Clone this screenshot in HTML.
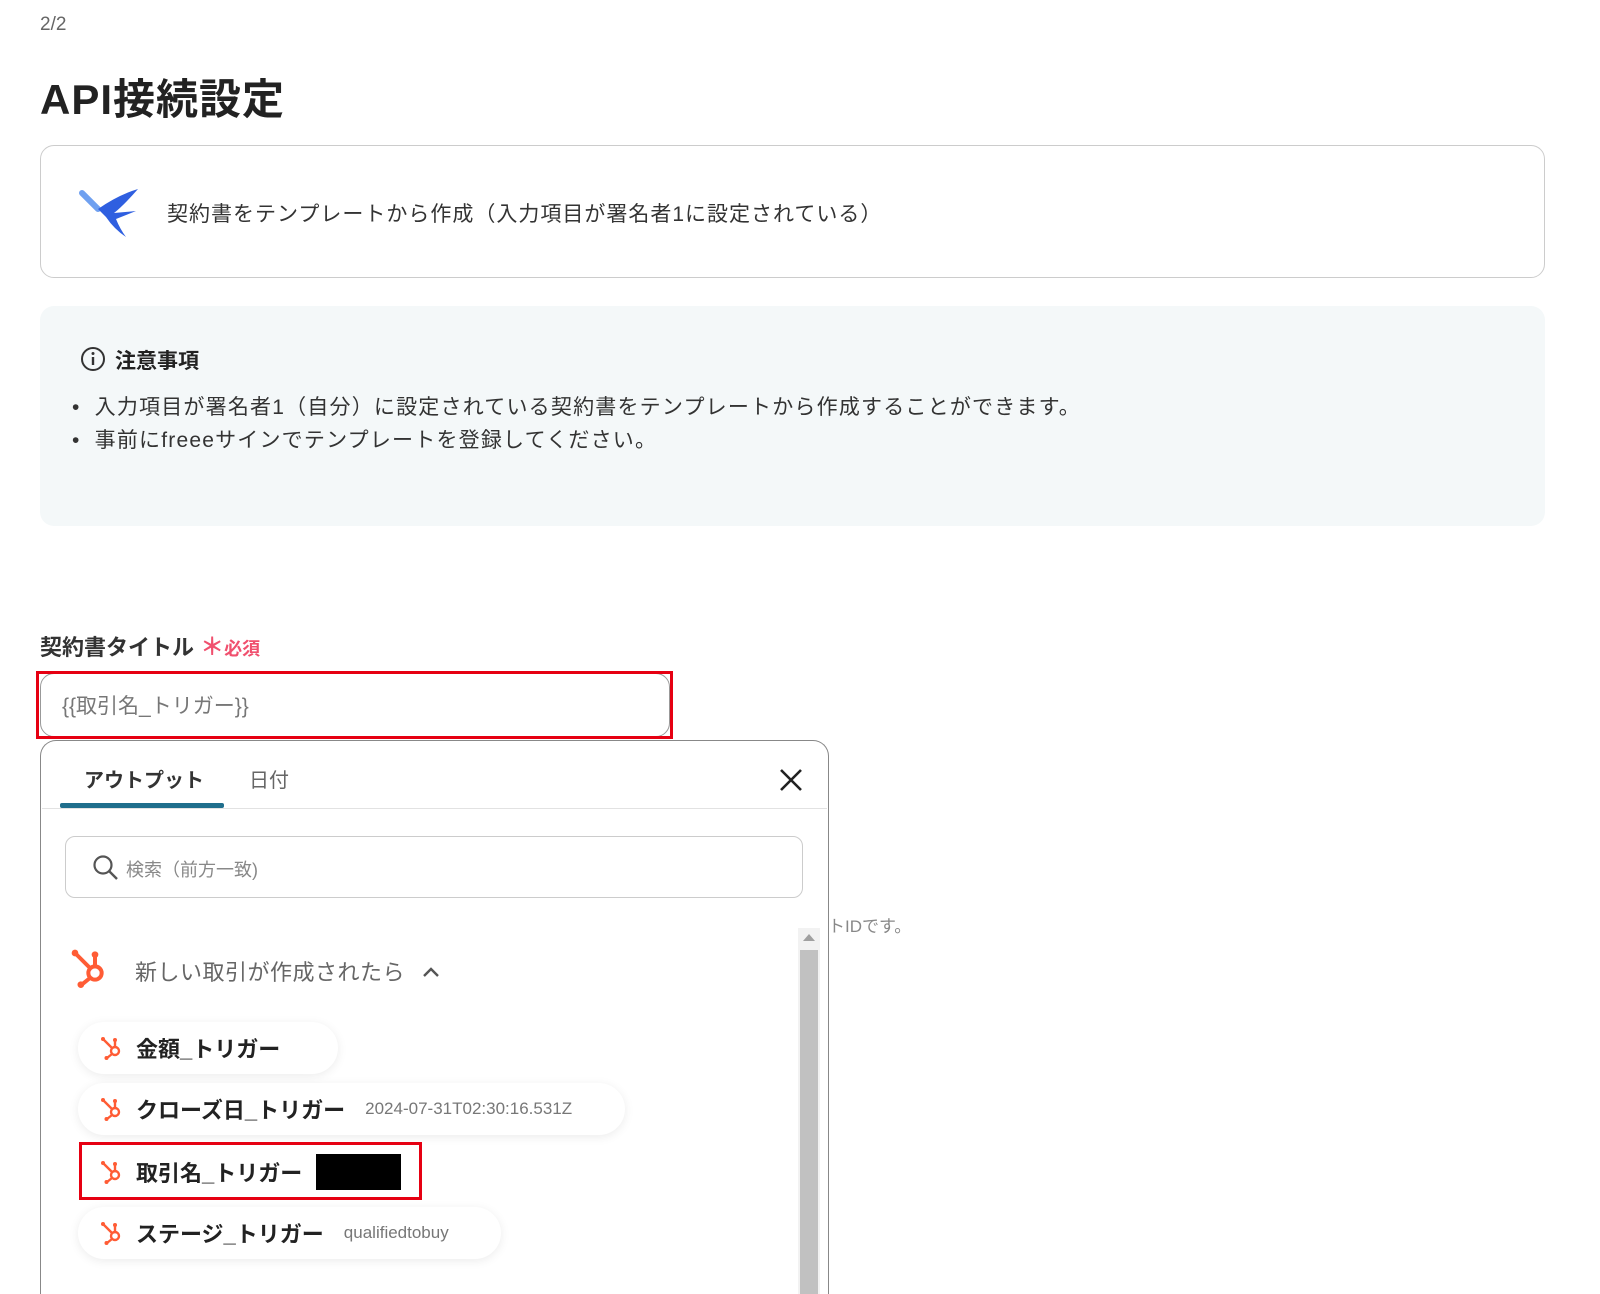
<!DOCTYPE html>
<html style="overflow:hidden;height:1294px"><head><meta charset="utf-8">
<style>
body{margin:0;width:1600px;height:1294px;background:#fff;position:relative;overflow:hidden;font-family:"Liberation Sans","Noto Sans CJK JP",sans-serif;color:#333}
.a{position:absolute}
.pill{position:absolute;left:78px;height:52px;background:#fff;border-radius:26px;box-shadow:0 2px 10px rgba(0,0,0,0.08);display:flex;align-items:center;padding-left:22px;box-sizing:border-box;font-size:22px;font-weight:bold;color:#222}
.pill svg{margin-right:12px}
.pill .v{font-weight:normal;font-size:17px;color:#777;margin-left:20px}
</style></head><body>
<svg width="0" height="0" style="position:absolute"><defs>
<symbol id="hs" viewBox="0 0 24 24"><g stroke="#ff5c35" stroke-width="2.4" fill="none" stroke-linecap="round"><circle cx="15" cy="15" r="4"/><line x1="3" y1="3" x2="12" y2="12"/><line x1="15" y1="11" x2="15" y2="5"/><line x1="12" y1="18" x2="7" y2="22"/></g><g fill="#ff5c35"><circle cx="3" cy="3" r="2"/><circle cx="15" cy="4" r="2"/><circle cx="6.5" cy="22" r="2"/></g></symbol>
</defs></svg>
<div class="a" style="left:40px;top:14px;font-size:19px;color:#666">2/2</div>
<div class="a" style="left:40px;top:66px;font-size:42px;font-weight:bold;color:#222;letter-spacing:1px">API接続設定</div>
<div class="a" style="left:40px;top:145px;width:1505px;height:133px;border:1px solid #ccc;border-radius:14px;box-sizing:border-box"></div>
<svg class="a" style="left:78px;top:185px" width="64" height="54" viewBox="0 0 64 54"><path d="M4 8 L20 24" stroke="#6fa0f0" stroke-width="6" stroke-linecap="round"/><path d="M20 24 Q40 10 60 4 Q46 20 36 28 L58 26 L38 34 Q42 44 48 52 Q36 44 28 32 Z" fill="#2f5fe0"/></svg>
<div class="a" style="left:167px;top:198px;font-size:21px;color:#333;letter-spacing:1px">契約書をテンプレートから作成（入力項目が署名者1に設定されている）</div>
<div class="a" style="left:40px;top:306px;width:1505px;height:220px;background:#f4f8f9;border-radius:14px"></div>
<svg class="a" style="left:80px;top:346px" width="26" height="26" viewBox="0 0 26 26"><circle cx="13" cy="13" r="11" stroke="#333" stroke-width="2" fill="none"/><line x1="13" y1="11" x2="13" y2="19" stroke="#333" stroke-width="2.4"/><circle cx="13" cy="7.5" r="1.5" fill="#333"/></svg>
<div class="a" style="left:115px;top:345px;font-size:21px;font-weight:bold;color:#222">注意事項</div>
<div class="a" style="left:72px;top:391px;font-size:21px;line-height:33px;color:#333;letter-spacing:1.2px">•&nbsp;&nbsp;入力項目が署名者1（自分）に設定されている契約書をテンプレートから作成することができます。<br>•&nbsp;&nbsp;事前にfreeeサインでテンプレートを登録してください。</div>
<div class="a" style="left:40px;top:627px;font-size:22px;font-weight:bold;color:#333">契約書タイトル <span style="color:#f0506e;font-size:24px">＊</span><span style="color:#f0506e;font-size:18px">必須</span></div>
<div class="a" style="left:40px;top:673px;width:630px;height:64px;border:1px solid #999;border-radius:14px;box-sizing:border-box"></div>
<div class="a" style="left:36px;top:671px;width:637px;height:68px;border:3px solid #e60012;box-sizing:border-box"></div>
<div class="a" style="left:62px;top:690px;font-size:21px;color:#777">{{取引名_トリガー}}</div>
<div class="a" style="left:828px;top:912px;font-size:17px;color:#888">トIDです。</div>
<div class="a" style="left:40px;top:740px;width:789px;height:554px;border:1.5px solid #888;border-bottom:none;border-radius:16px 16px 0 0;background:#fff;box-sizing:border-box"></div>
<div class="a" style="left:84px;top:764px;font-size:20px;font-weight:bold;color:#333">アウトプット</div>
<div class="a" style="left:249px;top:764px;font-size:20px;color:#666">日付</div>
<div class="a" style="left:60px;top:803px;width:164px;height:5px;background:#1f6e8c;border-radius:2px"></div>
<div class="a" style="left:42px;top:808px;width:785px;height:1px;background:#e2e2e2"></div>
<svg class="a" style="left:778px;top:767px" width="26" height="26" viewBox="0 0 26 26"><path d="M3 3L23 23M23 3L3 23" stroke="#222" stroke-width="2.6"/></svg>
<div class="a" style="left:65px;top:836px;width:738px;height:62px;border:1.5px solid #ccc;border-radius:10px;box-sizing:border-box"></div>
<svg class="a" style="left:92px;top:854px" width="28" height="28" viewBox="0 0 28 28"><circle cx="11" cy="11" r="8.5" stroke="#555" stroke-width="2.2" fill="none"/><line x1="17.5" y1="17.5" x2="25" y2="25" stroke="#555" stroke-width="2.4"/></svg>
<div class="a" style="left:126px;top:856px;font-size:18px;color:#888">検索（前方一致)</div>
<div class="a" style="left:798px;top:928px;width:22px;height:366px;background:#f2f2f2"></div>
<div class="a" style="left:803px;top:934px;width:0;height:0;border-left:6px solid transparent;border-right:6px solid transparent;border-bottom:7px solid #a0a0a0"></div>
<div class="a" style="left:800px;top:950px;width:18px;height:344px;background:#c1c1c1"></div>
<svg class="a" style="left:70px;top:948px" width="40" height="40" viewBox="0 0 24 24"><use href="#hs"/></svg>
<div class="a" style="left:135px;top:955px;font-size:22px;color:#666;letter-spacing:0.5px">新しい取引が作成されたら</div>
<svg class="a" style="left:421px;top:965px" width="20" height="14" viewBox="0 0 20 14"><path d="M3 11L10 4L17 11" stroke="#555" stroke-width="2.4" fill="none"/></svg>
<div class="pill" style="top:1022px;width:260px"><svg width="24" height="24" viewBox="0 0 24 24"><use href="#hs"/></svg>金額_トリガー</div>
<div class="pill" style="top:1083px;width:547px"><svg width="24" height="24" viewBox="0 0 24 24"><use href="#hs"/></svg>クローズ日_トリガー<span class="v">2024-07-31T02:30:16.531Z</span></div>
<div class="pill" style="top:1146px;width:340px;box-shadow:none"><svg width="24" height="24" viewBox="0 0 24 24"><use href="#hs"/></svg>取引名_トリガー<span style="display:inline-block;width:85px;height:36px;background:#000;margin-left:14px"></span></div>
<div class="a" style="left:79px;top:1142px;width:343px;height:58px;border:3px solid #e60012;box-sizing:border-box"></div>
<div class="pill" style="top:1207px;width:423px"><svg width="24" height="24" viewBox="0 0 24 24"><use href="#hs"/></svg>ステージ_トリガー<span class="v">qualifiedtobuy</span></div>
</body></html>
